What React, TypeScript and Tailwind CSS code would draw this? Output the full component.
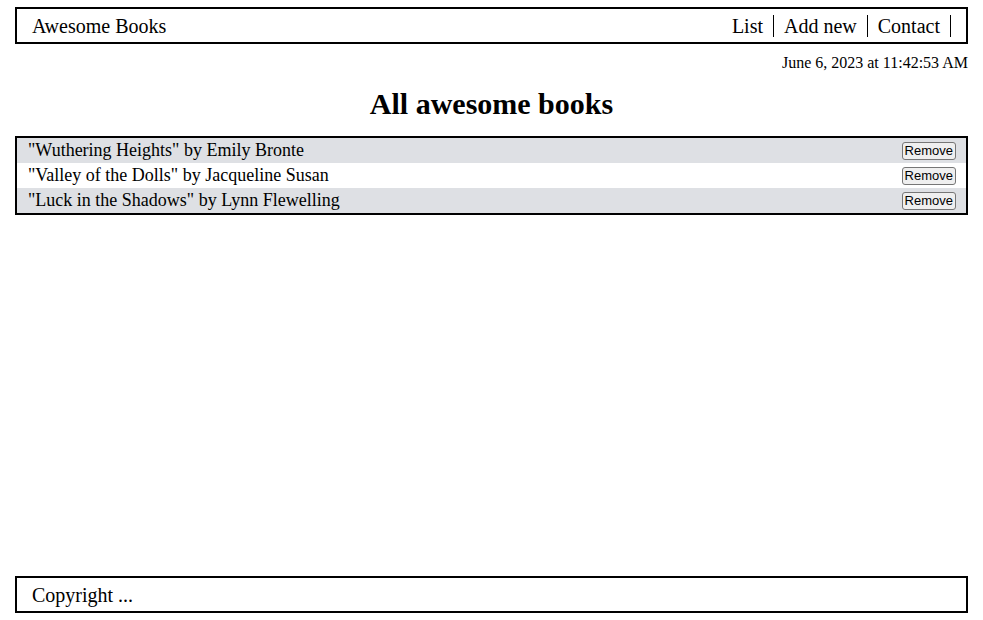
const books = [
  { title: "Wuthering Heights", author: "Emily Bronte" },
  { title: "Valley of the Dolls", author: "Jacqueline Susan" },
  { title: "Luck in the Shadows", author: "Lynn Flewelling" },
];

const navLinks = ["List", "Add new", "Contact"];

export default function App() {
  return (
    <div className="flex h-screen flex-col px-[15px] py-[7px] font-['Liberation_Serif',serif] text-black">
      {/* Header */}
      <header className="flex h-[37px] items-center justify-between border-2 border-black pl-[15px] pr-[15px]">
        <h1 className="text-[20px]">Awesome Books</h1>
        <ul className="flex items-center">
          {navLinks.map((link) => (
            <li
              key={link}
              className="border-r border-black px-[10px] text-[20px] leading-[22px]"
            >
              {link}
            </li>
          ))}
        </ul>
      </header>

      <main className="flex-1">
        <p className="mt-[7px] text-right text-[16px] leading-[24px]">
          June 6, 2023 at 11:42:53 AM
        </p>
        <h2 className="mt-[6px] text-center text-[30px] leading-[45px] font-bold">
          All awesome books
        </h2>

        {/* Book list */}
        <ul className="mt-[10px] border-2 border-black">
          {books.map((book, i) => (
            <li
              key={book.title}
              className={
                "flex h-[25px] items-center justify-between pl-[11px] pr-[10px] text-[18px] " +
                (i % 2 === 0 ? "bg-[#dee0e4]" : "bg-white")
              }
            >
              <span>
                "{book.title}" by {book.author}
              </span>
              <button className="h-[18px] rounded-[3px] border border-[#767676] bg-[#efefef] px-[2px] font-['Liberation_Sans',sans-serif] text-[13px] leading-none">
                Remove
              </button>
            </li>
          ))}
        </ul>
      </main>

      {/* Footer */}
      <footer className="flex h-[37px] items-center border-2 border-black pl-[15px] text-[20px]">
        Copyright ...
      </footer>
    </div>
  );
}
